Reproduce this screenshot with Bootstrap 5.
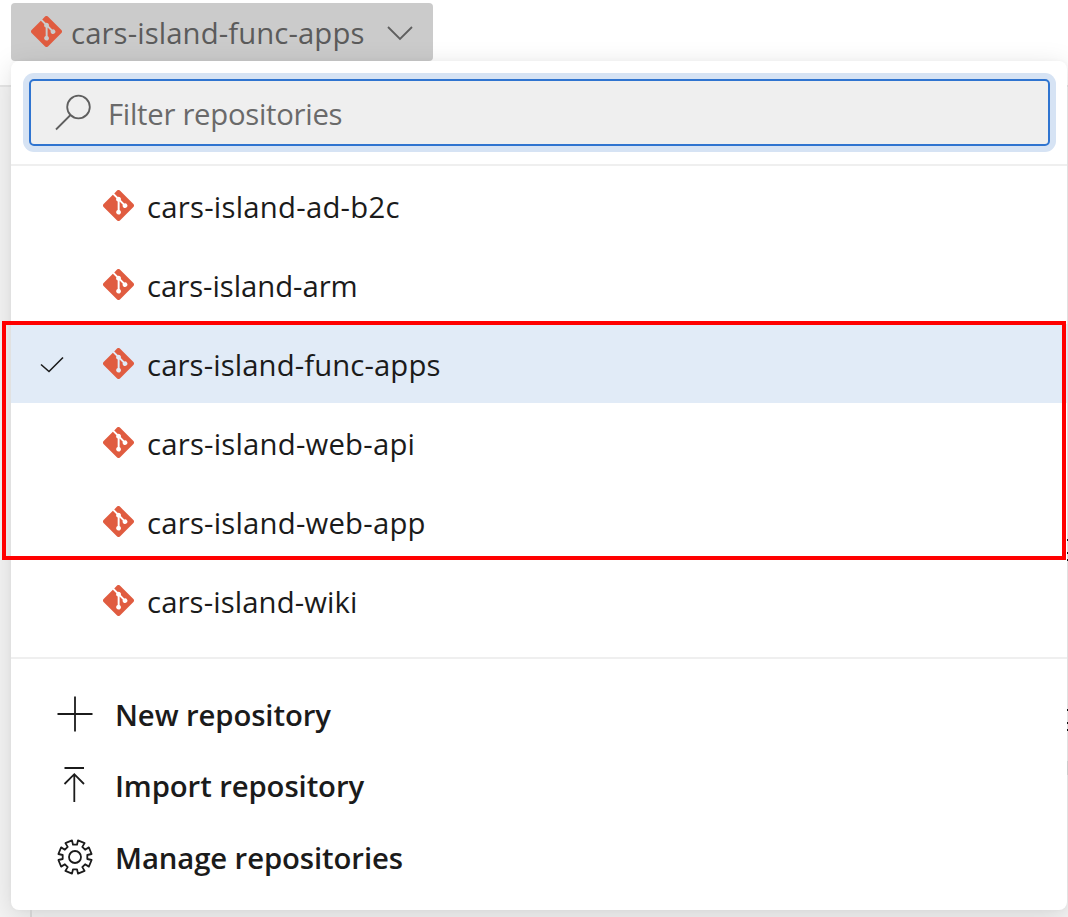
<!DOCTYPE html>
<html lang="en">
<head>
<meta charset="utf-8">
<title>Repositories</title>
<link href="https://cdn.jsdelivr.net/npm/bootstrap@5.3.0/dist/css/bootstrap.min.css" rel="stylesheet">
<style>
body{font-family:"Open Sans","Noto Sans",sans-serif;font-size:29.3px;line-height:40px;color:#1b1b1b;height:917px;overflow:hidden;background:linear-gradient(#fff 85px,#e6e6e6 85px,#e6e6e6 87px,#f4f4f4 87px)}
svg{flex:none;display:block;overflow:visible}
.git{width:31px;height:31px;fill:#e05c40}
.line-icon{fill:none;stroke:#1b1b1b;stroke-width:1.8}
.repo-btn,.repo-btn:hover{width:422px;height:58px;margin:3px 0 0 11px;padding:0 20px 0 20px;background:#cbcbcb;color:#5b5b5b;border:0;border-radius:4px;font-size:inherit;line-height:40px}
.repo-btn .git{margin:-1px 9px 0 0}
.repo-btn span{letter-spacing:.1px;padding-top:2px}
.repo-btn .line-icon{margin-top:2px}
.repo-btn .line-icon,.filter .line-icon{stroke:#5f5f5f}
.repo-menu{width:1056px;height:849px;margin-left:11px;border-radius:8px;background:#fff;box-shadow:0 6px 28px rgba(0,0,0,.13),0 0 4px rgba(0,0,0,.03)}
.filter-wrap{padding:18px 17px 18px 18px;height:105px;border-bottom:2px solid #efefef}
.filter{height:67px;border:2px solid #2f74d0;border-radius:5px;background:#efefef;box-shadow:0 0 0 6px #d6e3f4;padding-left:24px}
.filter input{background:none;border:0;outline:0;padding:0;margin:2px 0 0 16px;color:#6a6a6a;width:800px;height:44px;letter-spacing:-.28px}
.filter input::placeholder{color:#6a6a6a;opacity:1}
.repos{height:493px;border-bottom:2px solid #efefef}
.repo{height:79px;padding-left:29px}
.repo.selected{background:#e1ebf7}
.check-slot{width:24px;margin-right:39px}
.check-slot .line-icon{stroke-width:1.6}
.repo .git{margin-right:13px}
.repo span{padding-top:2px}
.ls-a{letter-spacing:.24px}
.ls-b{letter-spacing:-.05px}
.ls-c{letter-spacing:.1px}
.ls-d{letter-spacing:.21px}
.actions{padding-top:19px}
.action{height:71.5px;padding-left:46px;font-weight:580;letter-spacing:-.1px}
.action svg{width:36px;height:36px;margin-right:22px}
.action span{padding-top:2px}
.highlight{left:2px;top:321px;width:1064px;height:239px;border:4px solid #f00}
.rule-below{left:30px;top:910px;width:2px;height:7px;background:#d0d0d0}
.edge{left:1067px;top:0}
</style>
</head>
<body class="position-relative">
<svg width="0" height="0" class="position-absolute"><symbol id="git" viewBox="0 0 16 16"><path d="M15.698 7.287 8.712.302a1.03 1.03 0 0 0-1.457 0l-1.45 1.45 1.84 1.84a1.223 1.223 0 0 1 1.55 1.56l1.773 1.774a1.224 1.224 0 0 1 1.267 2.025 1.226 1.226 0 0 1-2.002-1.334L8.58 5.963v4.353a1.226 1.226 0 1 1-1.008-.036V5.887a1.226 1.226 0 0 1-.666-1.608L5.093 2.465l-4.79 4.79a1.03 1.03 0 0 0 0 1.457l6.986 6.986a1.03 1.03 0 0 0 1.457 0l6.953-6.953a1.03 1.03 0 0 0 0-1.457"/></symbol></svg>
<div class="d-flex flex-column">
<button class="btn repo-btn d-flex align-items-center"><svg class="git"><use href="#git"/></svg><span>cars-island-func-apps</span><svg class="line-icon ms-auto" width="26" height="14"><path d="M1 1 13 13 25 1"/></svg></button>
<div class="repo-menu">
<div class="filter-wrap"><div class="filter d-flex align-items-center"><svg class="line-icon" width="37" height="36"><circle cx="23.500" cy="12" r="11.300"/><path d="M15.500 20 1 34.500"/></svg><input placeholder="Filter repositories" aria-label="Filter repositories"></div></div>
<div class="repos">
<div class="repo d-flex align-items-center"><div class="check-slot"></div><svg class="git"><use href="#git"/></svg><span class="ls-a">cars-island-ad-b2c</span></div>
<div class="repo d-flex align-items-center"><div class="check-slot"></div><svg class="git"><use href="#git"/></svg><span class="ls-b">cars-island-arm</span></div>
<div class="repo selected d-flex align-items-center"><div class="check-slot"><svg class="line-icon" width="24" height="16"><path d="M1 8.500 9 15.500 23 1.500"/></svg></div><svg class="git"><use href="#git"/></svg><span class="ls-c">cars-island-func-apps</span></div>
<div class="repo d-flex align-items-center"><div class="check-slot"></div><svg class="git"><use href="#git"/></svg><span class="ls-d">cars-island-web-api</span></div>
<div class="repo d-flex align-items-center"><div class="check-slot"></div><svg class="git"><use href="#git"/></svg><span class="ls-d">cars-island-web-app</span></div>
<div class="repo d-flex align-items-center"><div class="check-slot"></div><svg class="git"><use href="#git"/></svg><span class="ls-c">cars-island-wiki</span></div>
</div>
<div class="actions">
<div class="action d-flex align-items-center"><svg class="line-icon" viewBox="0 0 36 36"><path d="M18 .5V35.500M.5 18H35.500"/></svg><span>New repository</span></div>
<div class="action d-flex align-items-center"><svg class="line-icon" viewBox="0 0 36 36"><path d="M7.500 1H27M17.300 35V7M7.500 17 17.300 7.200 27 17"/></svg><span>Import repository</span></div>
<div class="action d-flex align-items-center"><svg class="line-icon" viewBox="-18 -18 36 36"><path stroke-linejoin="round" d="M-3-16.600-2-12.300 2-12.300 3-16.600 9.620-13.860 7.280-10.110 10.110-7.280 13.860-9.620 16.600-3 12.300-2 12.300 2 16.600 3 13.860 9.620 10.110 7.280 7.280 10.110 9.620 13.860 3 16.600 2 12.300-2 12.300-3 16.600-9.620 13.860-7.280 10.110-10.110 7.280-13.860 9.620-16.600 3-12.300 2-12.300-2-16.600-3-13.860-9.620-10.110-7.280-7.280-10.110-9.620-13.860z"/><circle r="6"/></svg><span>Manage repositories</span></div>
</div>
</div>
</div>
<div class="position-absolute rule-below"></div>
<svg class="position-absolute edge" width="1" height="917"><path fill="#111" d="M0 539h1v2H0zM0 552h1v2H0zM0 559h1v2H0zM0 709h1v2H0zM0 722h1v2H0zM0 729h1v2H0z"/><path fill="#ccc" d="M0 761h1v14H0z"/></svg>
<div class="position-absolute highlight"></div>
<script src="https://cdn.jsdelivr.net/npm/bootstrap@5.3.0/dist/js/bootstrap.bundle.min.js"></script>
</body>
</html>
